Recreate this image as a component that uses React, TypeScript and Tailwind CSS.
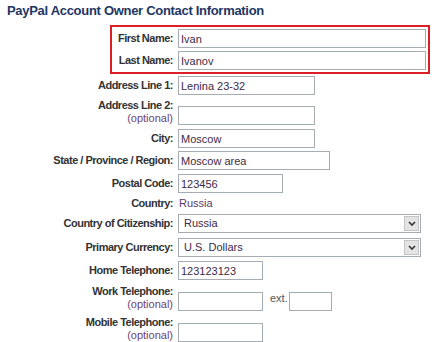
import type { ReactNode } from 'react';

function Label({ children, optional, className }: { children: ReactNode; optional?: boolean; className: string }) {
  return (
    <div className={`shrink-0 text-right leading-[13px] ${className}`}>
      <div className="font-bold tracking-[-0.5px] text-[#333]">{children}</div>
      {optional && <div className="text-[#6e3f72]">(optional)</div>}
    </div>
  );
}

function Field({ value, className }: { value?: string; className: string }) {
  return (
    <input
      readOnly
      defaultValue={value}
      className={`h-[19px] shrink-0 border border-[#a5acb2] bg-white px-[2px] text-[11px] text-[#3e2a48] outline-none ${className}`}
    />
  );
}

function Dropdown({ value }: { value: string }) {
  return (
    <div className="flex h-[19px] w-[243px] shrink-0 items-center border border-[#a5acb2] bg-white pl-[5px] pr-px">
      <span className="flex-1 text-[#3e2a48]">{value}</span>
      <span className="flex h-[15px] w-[15px] items-center justify-center border border-[#c4c4c4] bg-[#e4e4e4]">
        <svg width="8" height="5" viewBox="0 0 8 5">
          <path d="M1 1 L4 4 L7 1" fill="none" stroke="#333" strokeWidth="1.6" />
        </svg>
      </span>
    </div>
  );
}

export default function App() {
  return (
    <div className="h-[342px] w-[434px] overflow-hidden bg-white font-['Liberation_Sans',Arial,sans-serif] text-[11px] leading-[13px]">
      <h1 className="pl-[7px] pt-[3px] text-[13px] font-bold leading-[16px] tracking-[-0.3px] text-[#1e3662]">
        PayPal Account Owner Contact Information
      </h1>

      <div className="ml-[110px] mt-[6px] flex w-[320px] flex-col gap-[3px] border-2 border-[#dc1f26] py-[2px]">
        <div className="flex items-center gap-[5px]">
          <Label className="w-[61px]">First Name:</Label>
          <Field value="Ivan" className="w-[248px]" />
        </div>
        <div className="flex items-center gap-[5px]">
          <Label className="w-[61px]">Last Name:</Label>
          <Field value="Ivanov" className="w-[248px]" />
        </div>
      </div>

      <div className="mt-[2px] flex items-center gap-[5px]">
        <Label className="w-[173px]">Address Line 1:</Label>
        <Field value="Lenina 23-32" className="w-[137px]" />
      </div>
      <div className="mt-[4px] flex items-end gap-[5px]">
        <Label optional className="w-[173px]">Address Line 2:</Label>
        <Field className="w-[137px]" />
      </div>
      <div className="mt-[4px] flex items-center gap-[5px]">
        <Label className="w-[173px]">City:</Label>
        <Field value="Moscow" className="w-[137px]" />
      </div>
      <div className="mt-[3px] flex items-center gap-[5px]">
        <Label className="w-[173px]">State / Province / Region:</Label>
        <Field value="Moscow area" className="w-[152px]" />
      </div>
      <div className="mt-[4px] flex items-center gap-[5px]">
        <Label className="w-[173px]">Postal Code:</Label>
        <Field value="123456" className="w-[105px]" />
      </div>
      <div className="mt-[3px] flex h-[15px] items-center gap-[5px]">
        <Label className="w-[173px]">Country:</Label>
        <span className="pl-px text-[#5c3a66]">Russia</span>
      </div>
      <div className="mt-[3px] flex items-center gap-[5px]">
        <Label className="w-[173px]">Country of Citizenship:</Label>
        <Dropdown value="Russia" />
      </div>
      <div className="mt-[5px] flex items-center gap-[5px]">
        <Label className="w-[173px]">Primary Currency:</Label>
        <Dropdown value="U.S. Dollars" />
      </div>
      <div className="mt-[4px] flex items-center gap-[5px]">
        <Label className="w-[173px]">Home Telephone:</Label>
        <Field value="123123123" className="w-[85px]" />
      </div>
      <div className="mt-[5px] flex items-end gap-[5px]">
        <Label optional className="w-[173px]">Work Telephone:</Label>
        <div className="flex items-start">
          <Field className="w-[85px]" />
          <span className="ml-[7px] w-[19px] text-[#555]">ext.</span>
          <Field className="w-[43px]" />
        </div>
      </div>
      <div className="mt-[5px] flex items-end gap-[5px]">
        <Label optional className="w-[173px]">Mobile Telephone:</Label>
        <Field className="w-[85px]" />
      </div>
    </div>
  );
}
